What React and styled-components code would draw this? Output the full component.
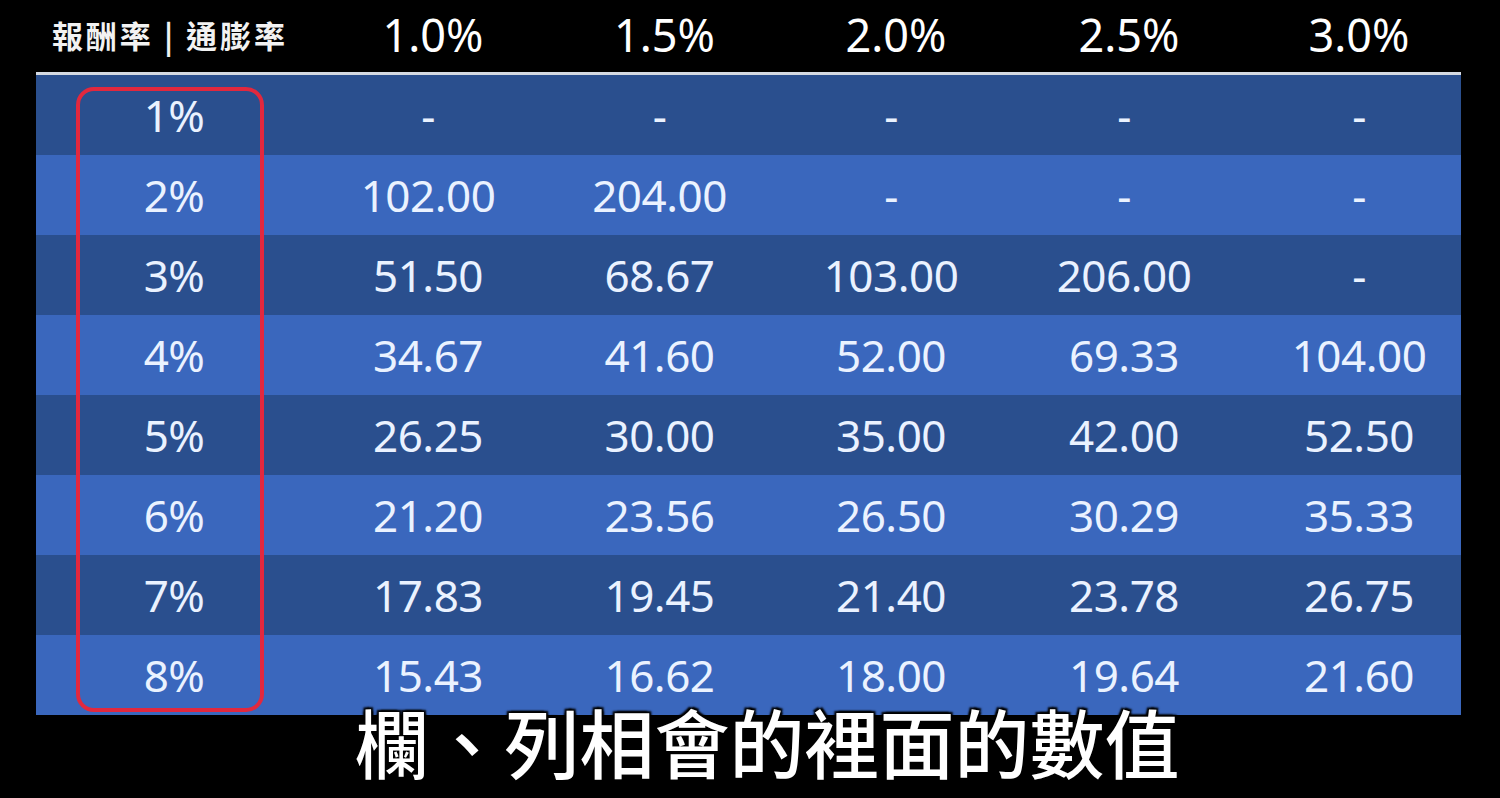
import React from 'react';
import styled, {createGlobalStyle} from 'styled-components';

const Global = createGlobalStyle`
  html, body {
    margin: 0;
    padding: 0;
    background: #000;
  }
`;

const Page = styled.div`
  width: 1500px;
  height: 798px;
  background: #000;
  overflow: hidden;
  display: flex;
  flex-direction: column;
`;

const Table = styled.div`
  position: relative;
  margin-left: 36px;
  width: 1425px;
`;

const COLS = '276px 232px 231px 232px 234px 220px';

const HeaderRow = styled.div`
  display: grid;
  grid-template-columns: ${COLS};
  height: 72px;
  border-bottom: 3px solid #d5dae2;
  align-items: center;
`;

const HeadLabel = styled.div`
  text-align: center;
  font-family: "Noto Sans CJK TC", "Noto Sans", sans-serif;
  font-weight: 700;
  font-size: 31px;
  color: #f2f2f2;
  letter-spacing: 3px;
  padding-right: 8px;
  white-space: nowrap;
  margin-top: -4px;
`;

const HeadCell = styled.div`
  text-align: center;
  font-family: "Noto Sans", "Open Sans", sans-serif;
  font-size: 45px;
  color: #fff;
  padding-left: ${p => p.$shift || 0}px;
  margin-top: -4px;
`;

const Row = styled.div`
  display: grid;
  grid-template-columns: ${COLS};
  height: 80px;
  align-items: center;
  background: ${p => (p.$light ? '#3a67bd' : '#2a4f8e')};
`;

const Cell = styled.div`
  text-align: center;
  font-family: "Noto Sans", "Open Sans", sans-serif;
  font-size: 44px;
  color: #eaf2ff;
  letter-spacing: -0.5px;
  padding-left: ${p => p.$shift || 0}px;
`;

const Highlight = styled.div`
  position: absolute;
  left: 40px;
  top: 87px;
  width: 180px;
  height: 617px;
  border: 4.5px solid #e2283e;
  border-radius: 18px;
  pointer-events: none;
`;

const Caption = styled.div`
  margin-top: -18px;
  padding-left: 34px;
  text-align: center;
  font-family: "Noto Sans CJK TC", "Noto Sans", sans-serif;
  font-weight: 500;
  font-size: 75px;
  line-height: 88px;
  color: #fff;
  position: relative;
  text-shadow: 0 0 3px #000, 2px 2px 2px #000, -2px -2px 2px #000, 2px -2px 2px #000, -2px 2px 2px #000;
`;

const heads = ['1.0%', '1.5%', '2.0%', '2.5%', '3.0%'];

const rows = [
  ['1%', '-', '-', '-', '-', '-'],
  ['2%', '102.00', '204.00', '-', '-', '-'],
  ['3%', '51.50', '68.67', '103.00', '206.00', '-'],
  ['4%', '34.67', '41.60', '52.00', '69.33', '104.00'],
  ['5%', '26.25', '30.00', '35.00', '42.00', '52.50'],
  ['6%', '21.20', '23.56', '26.50', '30.29', '35.33'],
  ['7%', '17.83', '19.45', '21.40', '23.78', '26.75'],
  ['8%', '15.43', '16.62', '18.00', '19.64', '21.60'],
];

const App = () => {
  return (
    <Page>
      <Global />
      <Table>
        <HeaderRow>
          <HeadLabel>報酬率 | 通膨率</HeadLabel>
          {heads.map((h, i) => (
            <HeadCell key={h} $shift={i === 4 ? 16 : 10}>{h}</HeadCell>
          ))}
        </HeaderRow>
        {rows.map((r, i) => (
          <Row key={r[0]} $light={i % 2 === 1}>
            {r.map((v, j) => (
              <Cell key={j} $shift={j === 5 ? 16 : 0}>{v}</Cell>
            ))}
          </Row>
        ))}
        <Highlight />
      </Table>
      <Caption>欄、列相會的裡面的數值</Caption>
    </Page>
  );
}

export default App;
